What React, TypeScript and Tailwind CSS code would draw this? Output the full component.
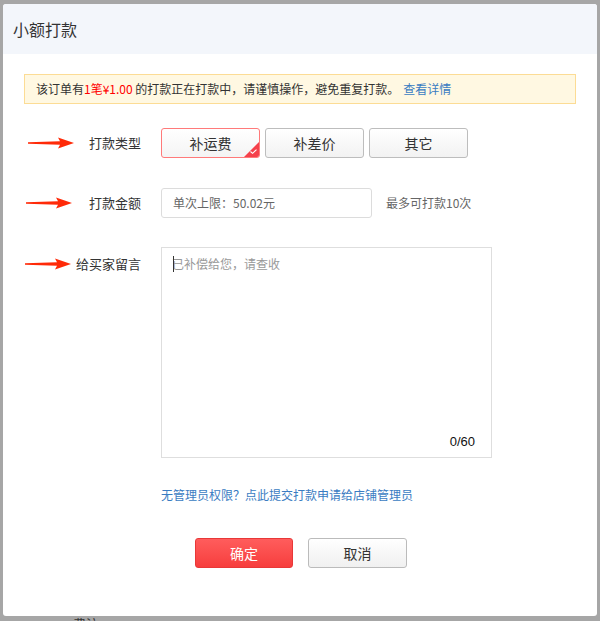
import React from "react"

const font = { fontFamily: '"Noto Sans CJK SC", "Noto Sans", sans-serif' }

function Arrow() {
  return (
    <svg width="46" height="12" viewBox="0 0 46 12" className="shrink-0">
      <polygon points="0,5.3 32,4.2 30,0.6 46,6 30,11.4 32,7.8 0,6.7" fill="#ff2a08" />
    </svg>
  )
}

function TypeButton({ label, selected }: { label: string; selected?: boolean }) {
  return (
    <button
      className={
        selected
          ? "relative h-[30px] w-[99px] overflow-hidden rounded-[3px] border border-[#ff7a7a] bg-gradient-to-b from-white to-[#f4f4f4] text-[14px] text-[#333]"
          : "relative h-[30px] w-[99px] overflow-hidden rounded-[3px] border border-[#bdbdbd] bg-gradient-to-b from-white to-[#f2f2f2] text-[14px] text-[#333]"
      }
    >
      {label}
      {selected && (
        <span className="absolute bottom-0 right-0 h-0 w-0 border-b-[15px] border-l-[15px] border-b-[#f5414b] border-l-transparent" />
      )}
      {selected && (
        <svg width="7" height="5" viewBox="0 0 7 5" className="absolute bottom-[3px] right-[2px]">
          <path d="M0.5 2.5 L2.6 4.3 L6.5 0.6" stroke="white" strokeWidth="1.1" fill="none" />
        </svg>
      )}
    </button>
  )
}

export default function App() {
  return (
    <div className="h-[621px] w-[600px] overflow-hidden bg-[#a6a6a6] px-[3px] pt-[4px]" style={font}>
      <div className="flex h-[612px] flex-col overflow-hidden rounded-[3px] bg-white">
        <div className="flex h-[50px] shrink-0 items-center bg-[#f3f6fb] pl-[10px] text-[16px] text-[#333]">
          小额打款
        </div>

        <div className="px-[21px] pt-[20px]">
          <div className="flex h-[30px] items-center border border-[#fcdc95] bg-[#fff8e2] pl-[11px] text-[12px] text-[#333]">
            该订单有<span className="text-[#f00]">1笔¥1.00</span>&nbsp;的打款正在打款中，请谨慎操作，避免重复打款。
            <span className="ml-[4px] text-[#3a7cc2]">查看详情</span>
          </div>
        </div>

        <div className="flex flex-col pl-[21px] pt-[24px]">
          <div className="flex items-center">
            <div className="flex w-[117px] items-center justify-between pl-[4px]">
              <Arrow />
              <span className="text-[13px] text-[#333]">打款类型</span>
            </div>
            <div className="ml-[20px] flex gap-[5px]">
              <TypeButton label="补运费" selected />
              <TypeButton label="补差价" />
              <TypeButton label="其它" />
            </div>
          </div>

          <div className="mt-[30px] flex items-center">
            <div className="flex w-[117px] items-center justify-between pl-[2px]">
              <Arrow />
              <span className="text-[13px] text-[#333]">打款金额</span>
            </div>
            <div className="ml-[20px] flex h-[30px] w-[211px] items-center rounded-[3px] border border-[#dcdcdc] pl-[11px] text-[12px] text-[#666]">
              单次上限：50.02元
            </div>
            <span className="ml-[14px] text-[12px] text-[#666]">最多可打款10次</span>
          </div>

          <div className="mt-[29px] flex items-start">
            <div className="mt-[7px] flex w-[117px] items-center justify-between pl-[1px]">
              <Arrow />
              <span className="text-[13px] text-[#333]">给买家留言</span>
            </div>
            <div className="relative ml-[20px] flex h-[211px] w-[331px] flex-col justify-between border border-[#dedede] px-[10px] pb-[6px] pt-[7px]">
              <div className="relative text-[12px] text-[#999]">
                <span className="absolute left-[1px] top-[1px] h-[16px] w-px bg-[#333]" />
                已补偿给您，请查收
              </div>
              <div className="self-end pr-[6px] text-[13px] text-[#111]" style={{ fontFamily: '"Liberation Sans", sans-serif' }}>
                0/60
              </div>
            </div>
          </div>

          <div className="ml-[137px] mt-[28px] text-[12px] text-[#3a7cc2]">无管理员权限？点此提交打款申请给店铺管理员</div>

          <div className="mt-[34px] flex gap-[15px] pl-[171px]">
            <button className="h-[30px] w-[98px] rounded-[3px] border border-[#e83838] bg-gradient-to-b from-[#ff5c5c] to-[#f73d3d] text-[14px] text-white">
              确定
            </button>
            <button className="h-[30px] w-[99px] rounded-[3px] border border-[#bbbbbb] bg-gradient-to-b from-white to-[#f0f0f0] text-[14px] text-[#333]">
              取消
            </button>
          </div>
        </div>
      </div>
      <div className="ml-[70px] mt-[1px] text-[13px] leading-[13px] text-[#333]">费注</div>
    </div>
  )
}
